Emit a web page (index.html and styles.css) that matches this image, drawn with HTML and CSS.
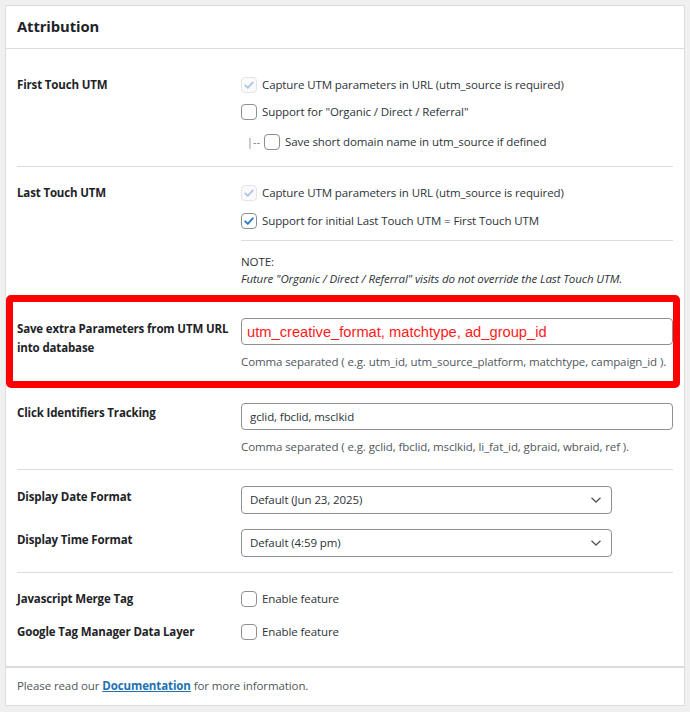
FILE: index.html
```html
<!DOCTYPE html>
<html lang="en">
<head>
<meta charset="utf-8">
<title>Attribution</title>
<link rel="stylesheet" href="styles.css">
</head>
<body>
<div class="card">
  <div class="card-head"><h2 class="card-title">Attribution</h2></div>
  <div class="card-body">

    <section class="group g-first">
      <div class="row">
        <div class="label">First Touch UTM</div>
        <div class="field">
          <div class="check"><span class="box box-disabled"><svg viewBox="0 0 16 16" width="16" height="16"><path d="M4.2 8.3l2.6 2.6 5-5.6" fill="none" stroke="#a9c8e6" stroke-width="1.8" stroke-linecap="round" stroke-linejoin="round"/></svg></span><span>Capture UTM parameters in URL (utm_source is required)</span></div>
          <div class="check mt7"><span class="box"></span><span>Support for "Organic / Direct / Referral"</span></div>
          <div class="check sub"><span class="tree">|--</span><span class="box"></span><span>Save short domain name in utm_source if defined</span></div>
        </div>
      </div>
    </section>

    <section class="group g-last">
      <div class="row">
        <div class="label">Last Touch UTM</div>
        <div class="field">
          <div class="check"><span class="box box-disabled"><svg viewBox="0 0 16 16" width="16" height="16"><path d="M4.2 8.3l2.6 2.6 5-5.6" fill="none" stroke="#a9c8e6" stroke-width="1.8" stroke-linecap="round" stroke-linejoin="round"/></svg></span><span>Capture UTM parameters in URL (utm_source is required)</span></div>
          <div class="check mt8"><span class="box box-checked"><svg viewBox="0 0 16 16" width="16" height="16"><path d="M4.2 8.3l2.6 2.6 5-5.6" fill="none" stroke="#2f7cc4" stroke-width="1.9" stroke-linecap="round" stroke-linejoin="round"/></svg></span><span>Support for initial Last Touch UTM = First Touch UTM</span></div>
          <hr class="divider">
          <p class="note">NOTE:<br><em>Future "Organic / Direct / Referral" visits do not override the Last Touch UTM.</em></p>
        </div>
      </div>
    </section>

    <section class="group g-params">
      <div class="highlight">
        <div class="row">
          <div class="label label-multi">Save extra Parameters from UTM URL into database</div>
          <div class="field">
            <div class="input input-red">utm_creative_format, matchtype, ad_group_id</div>
            <p class="desc">Comma separated ( e.g. utm_id, utm_source_platform, matchtype, campaign_id ).</p>
          </div>
        </div>
      </div>
      <div class="row row-click">
        <div class="label">Click Identifiers Tracking</div>
        <div class="field">
          <div class="input">gclid, fbclid, msclkid</div>
          <p class="desc">Comma separated ( e.g. gclid, fbclid, msclkid, li_fat_id, gbraid, wbraid, ref ).</p>
        </div>
      </div>
    </section>

    <section class="group g-format">
      <div class="row">
        <div class="label label-select">Display Date Format</div>
        <div class="field">
          <div class="select"><span>Default (Jun 23, 2025)</span><svg class="chev" viewBox="0 0 12 8" width="12" height="8"><path d="M1.5 1.8l4.5 4.2 4.5-4.2" fill="none" stroke="#50575e" stroke-width="1.3"/></svg></div>
        </div>
      </div>
      <div class="row mt15">
        <div class="label label-select">Display Time Format</div>
        <div class="field">
          <div class="select"><span>Default (4:59 pm)</span><svg class="chev" viewBox="0 0 12 8" width="12" height="8"><path d="M1.5 1.8l4.5 4.2 4.5-4.2" fill="none" stroke="#50575e" stroke-width="1.3"/></svg></div>
        </div>
      </div>
    </section>

    <section class="group g-tags">
      <div class="row">
        <div class="label">Javascript Merge Tag</div>
        <div class="field"><div class="check"><span class="box"></span><span>Enable feature</span></div></div>
      </div>
      <div class="row mt13">
        <div class="label">Google Tag Manager Data Layer</div>
        <div class="field"><div class="check"><span class="box"></span><span>Enable feature</span></div></div>
      </div>
    </section>

  </div>
  <div class="card-foot">Please read our <a href="#" class="doc-link">Documentation</a> for more information.</div>
</div>
</body>
</html>
```

FILE: styles.css
```css
* { box-sizing: border-box; }

html, body {
  margin: 0;
  padding: 0;
  background: #f0f0f1;
}

body {
  padding: 5px 5px;
  font-family: "Open Sans", "Noto Sans", sans-serif;
  font-size: 11.5px;
  letter-spacing: -0.1px;
  color: #1d2327;
  line-height: 20px;
}

.card {
  background: #fff;
  border: 1px solid #dcdcde;
  width: 680px;
}

.card-head {
  height: 43px;
  padding: 0 11px 3px;
  display: flex;
  align-items: center;
  border-bottom: 1px solid #dcdcde;
}

.card-title {
  margin: 0;
  font-size: 14.8px;
  font-weight: 700;
  color: #1d2327;
  letter-spacing: -0.1px;
}

.card-body {
  padding: 0 11px;
}

.group {
  border-bottom: 1px solid #dcdcde;
}

.g-first { padding: 26px 0 14px; }
.g-last { padding: 16px 0 8px; border-bottom: none; }
.g-params { padding: 0 0 12px; }
.g-format { padding: 16px 0 15px; }
.g-tags { padding: 16px 0 24px; border-bottom: none; }

.row {
  display: grid;
  grid-template-columns: 224px 1fr;
}

.label {
  font-weight: 700;
  font-size: 11.5px;
  letter-spacing: -0.15px;
  color: #1d2327;
}

.label-multi {
  line-height: 19px;
  padding-top: 1px;
}

.label-select { padding-top: 1px; }

.field { min-width: 0; }

.check {
  display: flex;
  align-items: center;
  height: 20px;
  color: #2c3338;
}

.mt7 { margin-top: 7px; }
.mt8 { margin-top: 8px; }
.mt13 { margin-top: 13px; }
.mt15 { margin-top: 15px; }

.box {
  width: 16px;
  height: 16px;
  border: 1px solid #8c8f94;
  border-radius: 4px;
  background: #fff;
  flex: none;
  margin-right: 5px;
  position: relative;
}

.box svg {
  position: absolute;
  left: -1px;
  top: -1px;
}

.box-disabled {
  border-color: #e2e4e7;
  background: #fbfbfc;
}

.box-checked { border-color: #8c8f94; }

.sub {
  margin-top: 10px;
  padding-left: 6px;
}

.tree {
  display: inline-block;
  width: 17px;
  color: #787c82;
  font-size: 10.5px;
  letter-spacing: 0.3px;
}

.sub .box { margin-right: 5px; }

.divider {
  border: none;
  border-top: 1px solid #dcdcde;
  margin: 9px 0 12px;
}

.note {
  margin: 0;
  line-height: 17px;
  color: #2c3338;
}

.highlight {
  border: 7px solid #ff0000;
  border-radius: 5px;
  margin: 0 -7px 0 -11px;
  padding: 16px 0 9px 4px;
}

.input {
  height: 27px;
  border: 1px solid #8c8f94;
  border-radius: 4px;
  padding: 0 8px;
  display: flex;
  align-items: center;
  color: #2c3338;
  background: #fff;
}

.input-red {
  color: #ff1a1a;
  font-family: "Liberation Sans", Arial, sans-serif;
  font-size: 14.7px;
  letter-spacing: 0;
  padding-left: 5px;
}

.desc {
  margin: 7px 0 0;
  color: #50575e;
  white-space: nowrap;
}

.row-click { padding-top: 15px; }

.select {
  width: 371px;
  height: 28px;
  border: 1px solid #8c8f94;
  border-radius: 4px;
  padding: 0 8px;
  display: flex;
  align-items: center;
  justify-content: space-between;
  color: #2c3338;
  background: #fff;
}

.chev { margin-right: 1px; }

.card-foot {
  border-top: 2px solid #dcdcde;
  padding: 8px 11px 9px;
  color: #50575e;
}

.doc-link {
  color: #2271b1;
  font-weight: 700;
  text-decoration: underline;
}
```
